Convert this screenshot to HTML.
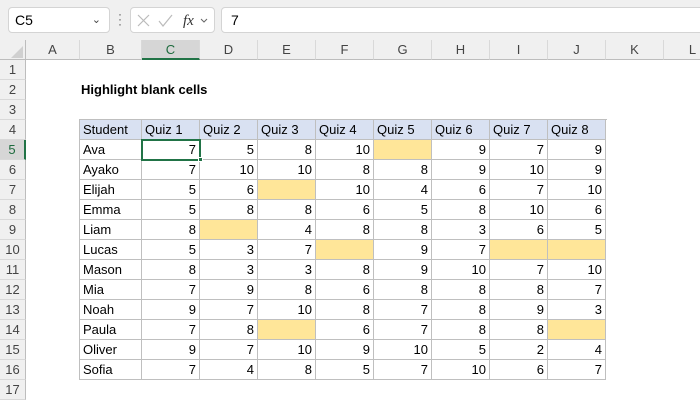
<!DOCTYPE html>
<html><head><style>
body{margin:0;width:700px;height:400px;overflow:hidden;background:#fff;font-family:"Liberation Sans",sans-serif;position:relative}
.a{position:absolute;box-sizing:border-box}
.top{left:0;top:0;width:700px;height:40px;background:#f0f0f0}
.box{background:#fff;border:1px solid #d4d4d4;border-radius:4px}
.ch{top:40px;height:20px;background:#f0f0f0;border-right:1px solid #d9d9d9;border-bottom:1px solid #bdbdbd;font-size:13px;color:#444;text-align:center;line-height:20px}
.rh{left:0;width:26px;height:20px;background:#f0f0f0;border-bottom:1px solid #d9d9d9;border-right:1px solid #bdbdbd;font-size:13px;color:#444;text-align:center;line-height:20px}
.c{height:20px;border-right:1px solid #bfbfbf;border-bottom:1px solid #bfbfbf;font-size:13px;line-height:20px;padding:0 3px;color:#000;white-space:nowrap}
.n{text-align:right}
.h{background:#d9e1f2}
.y{background:#ffe699}
</style></head><body>
<div class="a top"></div>
<div class="a box" style="left:8px;top:7px;width:102px;height:26px;font-size:14px;line-height:24px;padding-left:6px">C5<span style="position:absolute;right:8px;top:0;font-size:11px;color:#444">&#8964;</span></div>
<div class="a" style="left:118px;top:12px;font-size:12px;color:#555;line-height:5px">·<br>·<br>·</div>
<div class="a box" style="left:130px;top:7px;width:85px;height:26px"></div>
<svg class="a" style="left:136px;top:13px" width="80" height="16"><path d="M2 2l11 11M13 2L2 13" stroke="#bbb" stroke-width="1.2" fill="none"/><path d="M23 8l4 5 9-11" stroke="#bbb" stroke-width="1.2" fill="none"/><text x="47" y="12" font-family="Liberation Serif" font-style="italic" font-size="15" fill="#333">fx</text><path d="M65 6l3 3 3-3" stroke="#666" fill="none"/></svg>
<div class="a box" style="left:221px;top:7px;width:485px;height:26px;font-size:14px;line-height:24px;padding-left:9px">7</div>
<div class="a" style="left:0;top:40px;width:26px;height:20px;background:#f0f0f0;border-right:1px solid #bdbdbd;border-bottom:1px solid #bdbdbd;box-sizing:border-box"></div>
<svg class="a" style="left:10px;top:45px" width="14" height="14"><path d="M13 1V13H1Z" fill="#d0d0d0"/></svg>
<div id="g"></div>
<script>
var cols=[26,80,142,200,258,316,374,432,490,548,606,664,722],L="ABCDEFGHIJKL",h="";
for(var i=0;i<12;i++){var sel=i==2;h+='<div class="a ch" style="left:'+cols[i]+'px;width:'+(cols[i+1]-cols[i])+'px;'+(sel?'background:#d6d6d6;border-bottom:2px solid #217346;color:#1e6b3e':'')+'">'+L[i]+'</div>';}
for(var r=1;r<=17;r++){var sel=r==5;h+='<div class="a rh" style="top:'+(40+r*20)+'px;'+(sel?'background:#d6d6d6;border-right:2px solid #217346;color:#1e6b3e':'')+'">'+r+'</div>';}
h+='<div class="a" style="left:81px;top:80px;font-size:13px;font-weight:bold;line-height:20px">Highlight blank cells</div>';
var hd=["Student","Quiz 1","Quiz 2","Quiz 3","Quiz 4","Quiz 5","Quiz 6","Quiz 7","Quiz 8"];
var d=[["Ava",7,5,8,10,"",9,7,9],["Ayako",7,10,10,8,8,9,10,9],["Elijah",5,6,"",10,4,6,7,10],["Emma",5,8,8,6,5,8,10,6],["Liam",8,"",4,8,8,3,6,5],["Lucas",5,3,7,"",9,7,"",""],["Mason",8,3,3,8,9,10,7,10],["Mia",7,9,8,6,8,8,8,7],["Noah",9,7,10,8,7,8,9,3],["Paula",7,8,"",6,7,8,8,""],["Oliver",9,7,10,9,10,5,2,4],["Sofia",7,4,8,5,7,10,6,7]];
var rows=[hd].concat(d);
for(var r=0;r<rows.length;r++)for(var c=0;c<9;c++){var v=rows[r][c],cls="a c";if(r==0)cls+=" h";else if(c>0){cls+=" n";if(v==="")cls+=" y";}
h+='<div class="'+cls+'" style="left:'+cols[c+1]+'px;top:'+(120+r*20)+'px;width:'+(cols[c+2]-cols[c+1])+'px">'+v+'</div>';}
h+='<div class="a" style="left:79px;top:119px;width:528px;height:1px;background:#bfbfbf"></div><div class="a" style="left:79px;top:119px;width:1px;height:261px;background:#bfbfbf"></div>';
h+='<div class="a" style="left:141px;top:139px;width:60px;height:22px;border:2px solid #217346"></div><div class="a" style="left:198px;top:157px;width:5px;height:5px;background:#217346;border:1px solid #fff"></div>';
document.getElementById("g").innerHTML=h;
</script>
</body></html>
